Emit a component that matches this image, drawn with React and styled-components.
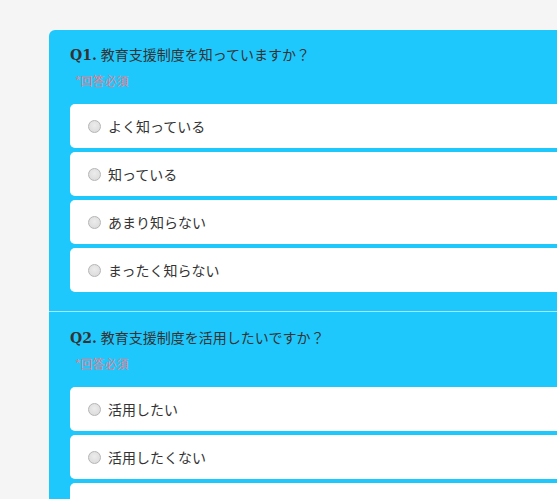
import React from "react";
import styled, { createGlobalStyle } from "styled-components";

const Global = createGlobalStyle`
  html, body { margin: 0; padding: 0; background: #f5f5f5; overflow: hidden; }
  body { font-family: "Noto Sans CJK JP", "Noto Sans", sans-serif; }
`;

const Page = styled.div`
  padding: 30px 0 0 49px;
  width: 800px;
`;

const Panel = styled.div`
  background: #1fc8fc;
  border-radius: 6px 0 0 0;
  width: 700px;
`;

const Section = styled.section`
  padding: 14px 0 15px 21px;
  & + & {
    border-top: 1px solid #a6e8fd;
    padding-top: 15px;
  }
`;

const Title = styled.h2`
  margin: 0;
  font-size: 14px;
  line-height: 20px;
  font-weight: normal;
  color: #333;
`;

const Num = styled.span`
  font-family: "DejaVu Serif", "Liberation Serif", serif;
  font-weight: bold;
  font-size: 14px;
  margin-right: 4px;
`;

const Required = styled.div`
  margin: 7px 0 14px 5px;
  font-size: 12px;
  line-height: 18px;
  color: #e3808f;
`;

const Option = styled.label`
  display: flex;
  align-items: center;
  height: 44px;
  margin-bottom: 4px;
  background: #fff;
  border-radius: 5px;
  padding-left: 18px;
  font-size: 14px;
  color: #333;
  box-sizing: border-box;
`;

const Radio = styled.span`
  width: 11px;
  height: 11px;
  border-radius: 50%;
  border: 1px solid #b5b5b5;
  background: radial-gradient(circle at 50% 40%, #ececec 0%, #d8d8d8 100%);
  margin-right: 7px;
  flex: none;
`;

const questions = [
  {
    n: "Q1.",
    q: "教育支援制度を知っていますか？",
    opts: ["よく知っている", "知っている", "あまり知らない", "まったく知らない"],
  },
  {
    n: "Q2.",
    q: "教育支援制度を活用したいですか？",
    opts: ["活用したい", "活用したくない", "わからない"],
  },
];

export default function App() {
  return (
    <>
      <Global />
      <Page>
        <Panel>
          {questions.map((item) => (
            <Section key={item.n}>
              <Title>
                <Num>{item.n}</Num>
                {item.q}
              </Title>
              <Required>*回答必須</Required>
              {item.opts.map((o) => (
                <Option key={o}>
                  <Radio />
                  {o}
                </Option>
              ))}
            </Section>
          ))}
        </Panel>
      </Page>
    </>
  );
}
